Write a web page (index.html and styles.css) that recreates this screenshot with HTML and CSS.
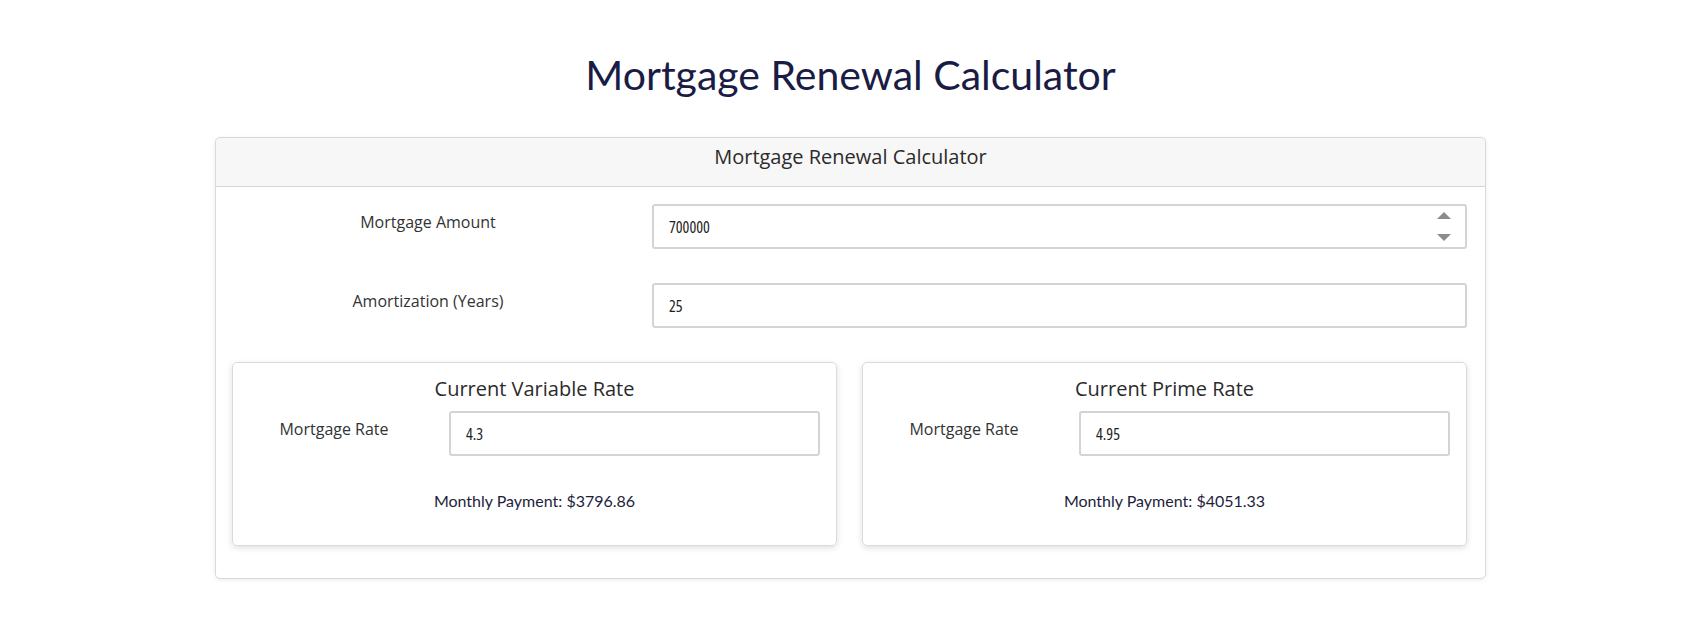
FILE: index.html
```html
<!DOCTYPE html>
<html lang="en">
<head>
    <meta charset="UTF-8">
    <meta name="viewport" content="width=device-width, initial-scale=1.0">
    <title>Mortgage Renewal Calculator</title>
    <link rel="stylesheet" href="styles.css">
</head>
<body>
    <div class="page">
        <h1 class="page-title">Mortgage Renewal Calculator</h1>

        <div class="calc-card">
            <div class="calc-header">Mortgage Renewal Calculator</div>
            <div class="calc-body">
                <div class="field-row">
                    <label class="field-label" for="amount">Mortgage Amount</label>
                    <div class="spin-wrap">
                        <input type="text" id="amount" class="field-input" value="700000">
                        <span class="spin-up"></span>
                        <span class="spin-down"></span>
                    </div>
                </div>
                <div class="field-row">
                    <label class="field-label" for="years">Amortization (Years)</label>
                    <input type="text" id="years" class="field-input" value="25">
                </div>

                <div class="rate-grid">
                    <div class="rate-card">
                        <div class="rate-title">Current Variable Rate</div>
                        <div class="rate-row">
                            <label class="field-label" for="variableRate">Mortgage Rate</label>
                            <input type="text" id="variableRate" class="field-input" value="4.3">
                        </div>
                        <div class="payment">Monthly Payment: $3796.86</div>
                    </div>
                    <div class="rate-card">
                        <div class="rate-title">Current Prime Rate</div>
                        <div class="rate-row">
                            <label class="field-label" for="primeRate">Mortgage Rate</label>
                            <input type="text" id="primeRate" class="field-input" value="4.95">
                        </div>
                        <div class="payment">Monthly Payment: $4051.33</div>
                    </div>
                </div>
            </div>
        </div>
    </div>
</body>
</html>
```

FILE: styles.css
```css
body {
    margin: 0;
    background-color: #fff;
    font-family: "Open Sans", "Noto Sans", sans-serif;
    color: #333;
}
.page {
    padding: 50px 0 40px 14px;
}
.page-title {
    margin: 0 0 37px;
    text-align: center;
    font-family: Lato, "Open Sans", sans-serif;
    font-weight: 400;
    font-size: 41px;
    line-height: 50px;
    color: #1a1c45;
}
.calc-card {
    max-width: 1271px;
    margin: 0 auto;
    box-sizing: border-box;
    border: 1px solid #d9d9d9;
    border-radius: 5px;
    box-shadow: 0 1px 4px rgba(0, 0, 0, 0.08);
    background-color: #fff;
}
.calc-header {
    padding: 5px 10px 15px;
    line-height: 28px;
    font-size: 20px;
    text-align: center;
    color: #2b2b2b;
    background-color: #f7f7f7;
    border-bottom: 1px solid #d6d6d6;
    border-radius: 5px 5px 0 0;
}
.calc-body {
    padding: 17px 18px 32px 16px;
}
.field-row {
    display: grid;
    grid-template-columns: 392px 1fr;
    gap: 28px;
    margin-bottom: 34px;
}
.field-label {
    padding-top: 6px;
    font-size: 16px;
    line-height: 24px;
    text-align: center;
    color: #333;
}
.field-input {
    box-sizing: border-box;
    width: 100%;
    height: 45px;
    padding: 0 15px;
    border: 2px solid #d4d4d4;
    border-radius: 3px;
    font-family: "Open Sans", "Liberation Sans Narrow", "DejaVu Sans Condensed", sans-serif;
    font-stretch: 75%;
    font-size: 16px;
    color: #222;
    background-color: #fff;
    outline: none;
}
.spin-wrap {
    position: relative;
}
.spin-up, .spin-down {
    position: absolute;
    right: 16px;
    width: 0;
    height: 0;
    border-left: 7px solid transparent;
    border-right: 7px solid transparent;
}
.spin-up {
    top: 8px;
    border-bottom: 7px solid #8c8c8c;
}
.spin-down {
    bottom: 8px;
    border-top: 7px solid #8c8c8c;
}
.rate-grid {
    display: grid;
    grid-template-columns: 1fr 1fr;
    gap: 25px;
}
.rate-card {
    padding: 14px 16px 32px;
    border: 1px solid #dadada;
    border-radius: 5px;
    box-shadow: 0 2px 6px rgba(0, 0, 0, 0.13);
}
.rate-title {
    font-size: 20px;
    line-height: 24px;
    text-align: center;
    color: #2b2b2b;
}
.rate-row {
    display: grid;
    grid-template-columns: 170px 1fr;
    gap: 30px;
    margin-top: 10px;
}
.payment {
    margin-top: 33px;
    font-family: Lato, "Open Sans", sans-serif;
    font-size: 16px;
    line-height: 24px;
    text-align: center;
    color: #1e1e3c;
}
```
